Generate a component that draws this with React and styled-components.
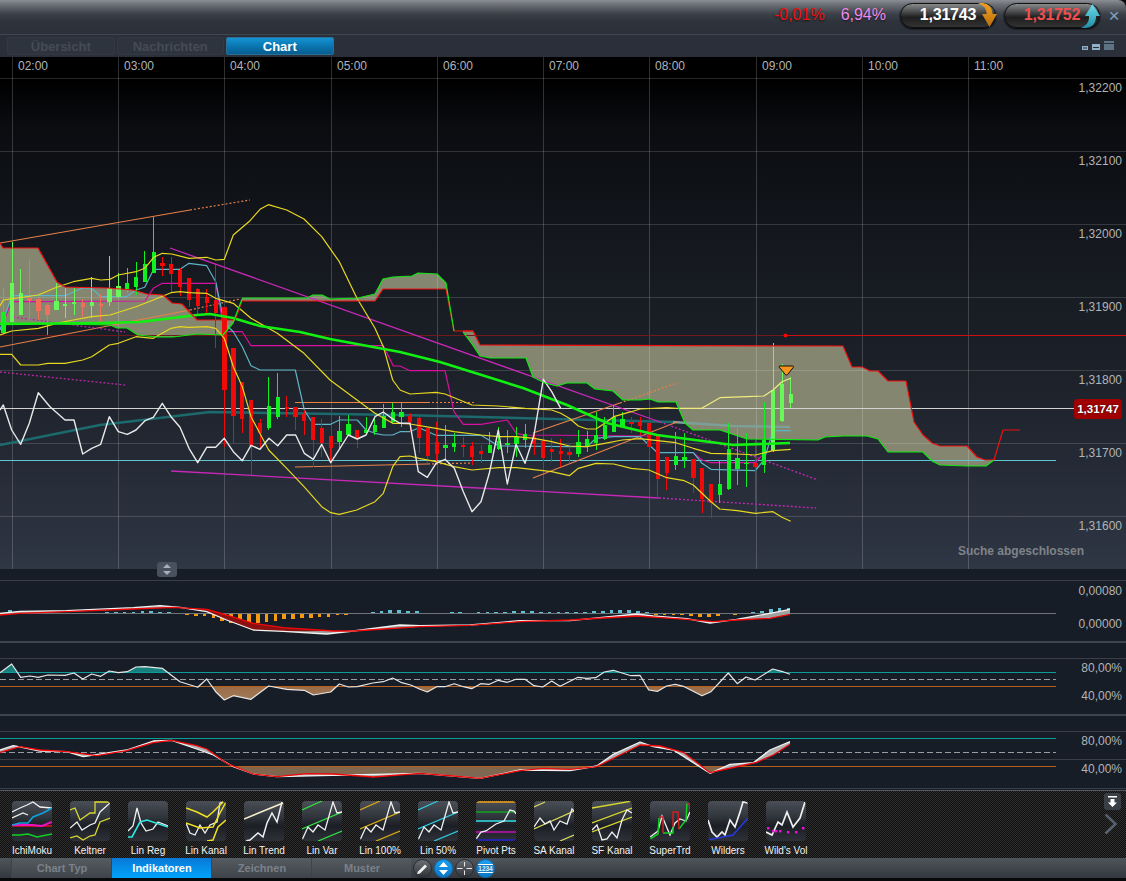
import React from "react";
import styled, { createGlobalStyle } from "styled-components";

const Global = createGlobalStyle`
  html, body { margin: 0; padding: 0; background: #000; }
  body { font-family: "Liberation Sans", Arial, sans-serif; overflow: hidden; }
`;

const Screen = styled.div`
  width: 1126px;
  height: 881px;
  display: flex;
  flex-direction: column;
  background: #0a0a0a;
  overflow: hidden;
`;

const TopBar = styled.div`
  height: 35px;
  flex: none;
  display: flex;
  align-items: center;
  justify-content: flex-end;
  padding: 0 4px 4px 0;
  box-sizing: border-box;
  background: linear-gradient(#8b8e95 0, #6a6d74 5px, #3c4149 14px, #2d323b 22px, #2b3039 34px);
  border-bottom: 1px solid #3f4650;
  border-top-right-radius: 8px;
`;

const Percent = styled.span`
  font-size: 16px;
  margin-right: ${(p) => p.$gap}px;
  color: ${(p) => p.$color};
  text-shadow: 0 1px 2px rgba(0, 0, 0, 0.6);
`;

const QuoteWrap = styled.div`
  position: relative;
  width: 96px;
  height: 25px;
  margin-right: ${(p) => p.$gap}px;
`;

const QuotePill = styled.div`
  height: 25px;
  box-sizing: border-box;
  border: 1px solid #111;
  border-radius: 13px;
  display: flex;
  align-items: center;
  justify-content: center;
  font-size: 16px;
  font-weight: bold;
  letter-spacing: -0.2px;
  color: ${(p) => p.$color};
  background: linear-gradient(#888a8c 0, #525354 30%, #1e1e1e 58%, #333 100%);
  box-shadow: 0 1px 2px #000;
`;

const QuoteArrow = styled.svg`
  position: absolute;
  right: -3px;
  top: 0;
`;

const CloseMark = styled.span`
  font-size: 19px;
  line-height: 19px;
  color: #7fa3be;
  width: 16px;
  text-align: center;
`;

const TabRow = styled.div`
  height: 22px;
  flex: none;
  display: flex;
  align-items: center;
  padding-left: 7px;
  box-sizing: border-box;
  background: #2a2f39;
`;

const Tab = styled.div`
  width: 107.5px;
  height: 18px;
  margin-right: 2px;
  display: flex;
  align-items: center;
  justify-content: center;
  border-radius: 3px;
  font-size: 13px;
  font-weight: bold;
  color: ${(p) => (p.$active ? "#fff" : "#454b55")};
  background: ${(p) => (p.$active ? "linear-gradient(#1597d8, #0a73ad 55%, #075a8a)" : "#2e343e")};
  box-shadow: ${(p) => (p.$active ? "inset 0 0 0 1px #2b6f95" : "inset 0 0 0 1px #333943")};
`;

const SizeIcons = styled.svg`
  margin-left: auto;
  margin-right: 12px;
`;

const ChartArea = styled.div`
  position: relative;
  z-index: 1;
  height: 512px;
  flex: none;
  background: linear-gradient(#000 0, #000 22px, #0a0c10 70px, #14171d 180px, #1d222b 330px, #2f3644 512px);
`;

const Plot = styled.svg`
  display: block;
  width: 1126px;
  height: 512px;
  text {
    font-family: "Liberation Sans", Arial, sans-serif;
    font-size: 12px;
    fill: #b2b4b8;
  }
`;

const PriceBadge = styled.div`
  position: absolute;
  right: 4px;
  top: 342px;
  width: 48px;
  height: 20px;
  border-radius: 3px;
  background: #a00000;
  color: #fff;
  font-size: 11.5px;
  font-weight: bold;
  display: flex;
  align-items: center;
  justify-content: center;
  text-shadow: 0 0 2px #300;
`;

const SearchNote = styled.div`
  position: absolute;
  right: 42px;
  top: 487px;
  font-size: 12px;
  font-weight: bold;
  color: #7f8388;
`;

const Stepper = styled.svg`
  position: absolute;
  left: 157px;
  top: 505px;
`;

const Panes = styled.div`
  height: 221px;
  flex: none;
  display: flex;
  flex-direction: column;
  background: #171d26;
`;

const Pane = styled.svg`
  display: block;
  width: 1126px;
  height: ${(p) => p.$h}px;
  flex: none;
  text {
    font-family: "Liberation Sans", Arial, sans-serif;
    font-size: 12px;
    fill: #b2b4b8;
  }
`;

const Strip = styled.div`
  position: relative;
  height: 68px;
  flex: none;
  box-sizing: border-box;
  padding: 10px 0 0 12px;
  display: flex;
  gap: 18px;
  border-top: 1px solid #55585e;
  background: repeating-conic-gradient(#2e2e2e 0 25%, #101010 0 50%) 0 0 / 2px 2px;
`;

const ThumbItem = styled.div`
  width: 40px;
  display: flex;
  flex-direction: column;
  align-items: center;
`;

const ThumbBox = styled.svg`
  width: 40px;
  height: 40px;
  display: block;
  border-radius: 4px;
  background: linear-gradient(#4a4e56 0, #30343b 40%, #1b1e24 62%, #2e3238 100%);
`;

const ThumbLabel = styled.div`
  margin-top: 3px;
  font-size: 10px;
  line-height: 13px;
  white-space: nowrap;
  color: #f2f2f2;
`;

const DockButton = styled.svg`
  position: absolute;
  right: 4px;
  top: 2px;
`;

const NextArrow = styled.svg`
  position: absolute;
  right: 8px;
  top: 22px;
`;

const BottomBar = styled.div`
  height: 20px;
  flex: none;
  display: flex;
  align-items: center;
  padding-left: 11px;
  background: linear-gradient(#50555c, #33383e);
`;

const BottomTab = styled.div`
  width: 100px;
  height: 20px;
  padding-left: 1px;
  display: flex;
  align-items: center;
  justify-content: center;
  box-sizing: border-box;
  border-left: 1px solid #3e4349;
  font-size: 11px;
  font-weight: bold;
  color: ${(p) => (p.$active ? "#fff" : "#7b8189")};
  background: ${(p) => (p.$active ? "linear-gradient(#0a78d6, #00a4fb)" : "linear-gradient(#565b62, #3f444a)")};
`;

const RoundRow = styled.div`
  display: flex;
  gap: 2px;
  margin-left: 2px;
`;

const RoundButton = styled.div`
  width: 19px;
  height: 19px;
  border-radius: 50%;
  overflow: hidden;
  display: flex;
  align-items: center;
  justify-content: center;
  box-sizing: border-box;
  border: 1px solid ${(p) => (p.$blue ? "#0d6fb8" : "#2a2d31")};
  background: ${(p) => (p.$blue ? "linear-gradient(#1b9ff0, #0a78c8)" : "linear-gradient(#6b6f76, #2f3237)")};
`;

const CounterText = styled.span`
  width: 19px;
  flex: none;
  font-size: 6.5px;
  line-height: 7px;
  font-weight: bold;
  text-align: center;
  color: #d8eefb;
  background: #1e7fc0;
  border-top: 1px solid #fff;
  border-bottom: 1px solid #fff;
`;

const Footer = styled.div`
  flex: 1;
  background: #08090a;
`;

// helpers: data below was read from crops at 3x, so it gets mapped back to page coordinates
const crop = (ox, oy) => (s) =>
  s
    .trim()
    .split(/\s+/)
    .map((p) => {
      const [x, y] = p.split(",").map(Number);
      return [ox + x / 3, oy + y / 3];
    });
const a = crop(0, 200);
const b = crop(400, 320);
const c = crop(0, 560);
const d = crop(420, 560);
const pts = (arr) => arr.map((p) => p[0].toFixed(1) + "," + p[1].toFixed(1)).join(" ");

const LINE_END = 1056;
const gridX = [12, 118, 224, 331, 437, 543, 649, 756, 862, 968];
const hours = ["02:00", "03:00", "04:00", "05:00", "06:00", "07:00", "08:00", "09:00", "10:00", "11:00"];
const gridY = [78, 151, 224, 297, 370, 443, 516];
const prices = ["1,32200", "1,32100", "1,32000", "1,31900", "1,31800", "1,31700", "1,31600"];

const redA = [[0, 243], [3, 248], [38, 248], [57, 282], [65, 287], [108, 288], [133, 290], [147, 294], [163, 295], [172, 303], [182, 304], [197, 320], [235, 320]];
const greenA = [[0, 323], [110, 325], [117, 328], [127, 328], [138, 335], [157, 337], [173, 337], [197, 334], [223, 335], [233, 323], [242, 299]];
const greenB = [[242, 298], [307, 298], [313, 295], [322, 295], [330, 299], [358, 298], [375, 294], [383, 279], [393, 277], [412, 276], [418, 273], [437, 274], [446, 283], [454, 331]];
const redB = [[242, 301], [375, 301], [383, 289], [446, 289], [454, 331], [473, 331]];
const redC = [[463, 331], [473, 331], [480, 345], [843, 346], [852, 367], [862, 367], [870, 371], [878, 371], [888, 381], [906, 381], [914, 422], [923, 435], [932, 443], [940, 446], [967, 446], [977, 457], [985, 460], [994, 460]];
const greenC = [[463, 332], [472, 344], [480, 356], [490, 358], [526, 358], [533, 377], [545, 383], [557, 386], [567, 383], [587, 383], [595, 389], [613, 391], [623, 400], [640, 400], [650, 399], [658, 402], [676, 402], [685, 423], [693, 430], [720, 430], [747, 439], [818, 440], [825, 437], [843, 436], [867, 436], [878, 439], [888, 452], [923, 452], [932, 461], [940, 465], [967, 466], [986, 466], [994, 460]];
const redTail = [[994, 460], [1003, 430], [1020, 430]];

const maGreen = [[0, 324], [100, 323], [140, 322], [197, 315], [210, 314], [233, 318], [260, 326], [300, 332], [330, 339], [400, 352], [440, 362], [523, 388], [567, 405], [607, 423], [657, 435], [733, 445], [790, 443]];
const maTeal = [[0, 445], [100, 425], [210, 412], [400, 415], [517, 418], [673, 422]];
const maTealCloud = [[673, 422], [733, 426], [790, 427]];

const whiteLine = [
  ...a("0,630 10,615 35,690 62,733 88,670 115,578 150,620 195,660 222,660 248,762 275,745 302,733 328,650 355,695 382,703 408,690 435,662 460,652 487,610 513,650 540,682 567,745 593,788 620,742 647,742 673,715 700,755 727,782 753,736 780,748 807,715 833,737 860,705 887,705 913,760 940,778 965,733 992,788 1018,748 1045,705 1072,717 1098,705 1125,650 1150,636 1178,657 1200,670"),
  ...b("30,310 55,455 82,472 108,430 135,418 163,445 190,515 216,575 243,545 268,460 295,330 322,492 348,373 375,430 402,345 430,178 455,215 482,265"),
];
const yellow1 = [
  ...a("0,318 10,300 115,285 170,262 220,245 275,235 302,240 330,238 355,225 408,215 434,205 461,172 487,160 515,162 567,175 620,172 647,180 673,178 700,105 750,62 780,28 805,14 860,30 912,57 965,110 1018,185 1071,295 1125,385 1150,440 1178,540 1200,570"),
];
const yellow1b = b("0,210 30,222 108,217 135,222 216,255 295,258 375,265 455,270 482,280 508,295 535,318 561,327 588,327 614,310 641,290 694,275 720,267 800,263 830,265");
const yellow1c = b("830,265 905,265 960,233 1040,230 1092,228 1119,210 1146,185 1172,175");
const yellow2 = [
  ...a("0,405 35,393 115,385 170,370 220,360 275,350 330,345 408,320 460,300 513,278 540,275 567,278 620,280 647,295 700,310 753,355 832,400 912,460 990,540 1071,600 1125,640 1178,670 1200,670"),
  ...b("30,312 108,325 162,335 243,345 296,350 349,350 402,355 455,365 508,378 561,380 614,370 667,360 720,356 773,362 827,368 880,385 933,400 1012,402 1066,405 1119,392 1172,388"),
];
const yellow3 = [
  ...a("0,463 35,463 62,495 115,495 143,490 195,490 248,480 275,470 328,435 355,430 408,410 460,415 513,385 540,380 567,382 620,380 647,385 673,415 700,500 727,560 753,650 806,750 860,805 912,860 965,920 992,938 1018,943 1070,930 1125,905 1150,880 1178,800 1200,770"),
  ...b("30,408 57,415 108,425 162,440 216,450 296,443 349,443 455,455 508,467 535,445 588,430 641,432 694,445 747,450 800,473 853,482 880,495 906,520 933,545 959,567 1012,572 1066,580 1119,575 1146,592 1172,604"),
];
const blueLine = [
  ...a("0,390 35,287 195,287 248,263 275,265 302,290 380,290 408,270 434,262 461,208 540,208 567,190 620,197 647,245 673,370 700,395 727,440 753,497 780,510 886,510 913,630 940,673 992,673 1018,660 1072,660 1098,690 1125,700 1150,705 1178,705 1200,695"),
  ...b("30,335 57,323 108,346 243,346 296,378 322,378 508,380 561,380 588,355 614,352 641,350 720,350 773,398 880,398 906,430 933,448 1066,452 1092,420 1119,332 1172,332"),
];
const magentaStep = [
  ...a("0,390 35,305 100,305 435,303 460,265 487,250 647,250 673,395 727,395 753,437 1150,437 1180,498 1200,498"),
  ...b("30,152 135,152 162,275 190,313 243,313 322,300 349,340 375,345 747,348"),
];
const magentaStep2 = b("880,398 906,420 933,428 1066,428 1092,400");

// x, high, low, bodyTop, bodyBottom, colour key; g = green, r = red, l/s = seen through the cloud
const candlesA = [
  [10, 265, 400, 335, 398, "g"], [36, 125, 365, 248, 365, "l"], [62, 207, 345, 280, 345, "l"], [88, 178, 360, 293, 303, "s"],
  [115, 295, 360, 297, 333, "s"], [142, 312, 405, 315, 345, "s"], [169, 250, 330, 303, 330, "l"], [195, 263, 353, 311, 318, "l"],
  [222, 265, 345, 307, 313, "l"], [248, 298, 352, 310, 322, "s"], [275, 232, 355, 307, 317, "l"], [302, 282, 367, 311, 317, "s"],
  [328, 168, 318, 265, 305, "l"], [355, 218, 290, 258, 290, "l"], [381, 205, 280, 248, 268, "g"], [408, 187, 285, 232, 260, "g"],
  [434, 153, 247, 193, 245, "g"], [461, 50, 220, 156, 220, "g"], [487, 172, 228, 188, 198, "r"], [513, 170, 275, 192, 223, "r"],
  [540, 205, 288, 210, 262, "r"], [567, 235, 320, 235, 300, "r"], [593, 265, 342, 267, 317, "r"], [620, 268, 342, 290, 308, "r"],
  [647, 195, 443, 300, 340, "r"], [673, 320, 740, 320, 570, "r"], [700, 445, 730, 445, 647, "r"], [726, 546, 700, 546, 656, "r"],
  [753, 601, 825, 601, 737, "r"], [780, 658, 745, 670, 698, "r"], [806, 530, 690, 617, 684, "g"], [833, 518, 658, 591, 650, "g"],
  [860, 587, 650, 622, 627, "r"], [886, 620, 690, 622, 652, "r"], [912, 630, 705, 642, 664, "r"], [939, 650, 800, 651, 720, "r"],
  [965, 657, 770, 685, 730, "r"], [992, 708, 790, 708, 743, "r"], [1018, 647, 745, 692, 725, "g"], [1045, 645, 705, 673, 706, "g"],
  [1071, 690, 745, 690, 714, "r"], [1098, 652, 702, 690, 700, "g"], [1124, 650, 705, 675, 697, "g"], [1151, 612, 685, 647, 684, "g"],
  [1178, 608, 670, 635, 665, "g"],
];
const candlesB = [
  [4, 250, 320, 277, 290, "g"], [30, 280, 335, 288, 305, "r"], [57, 282, 400, 293, 355, "r"], [83, 325, 430, 325, 408, "r"],
  [110, 305, 430, 366, 403, "r"], [136, 315, 420, 375, 385, "g"], [162, 340, 395, 370, 380, "g"], [189, 350, 410, 375, 382, "r"],
  [216, 367, 435, 377, 410, "r"], [243, 375, 430, 393, 402, "r"], [269, 337, 400, 375, 398, "g"], [296, 320, 390, 362, 388, "g"],
  [322, 330, 400, 370, 375, "g"], [349, 320, 410, 352, 372, "g"], [375, 312, 385, 343, 360, "g"], [402, 340, 405, 352, 372, "r"],
  [429, 345, 445, 363, 415, "r"], [455, 355, 425, 388, 396, "r"], [482, 358, 440, 392, 402, "r"], [508, 372, 430, 396, 405, "r"],
  [535, 330, 410, 367, 403, "g"], [561, 333, 395, 357, 382, "g"], [588, 277, 390, 345, 370, "g"], [614, 290, 360, 315, 358, "g"],
  [641, 255, 335, 290, 337, "g"], [667, 275, 325, 297, 318, "g"], [694, 290, 340, 305, 312, "r"], [720, 290, 345, 305, 318, "r"],
  [747, 300, 410, 310, 380, "r"], [773, 345, 535, 348, 478, "r"], [800, 412, 510, 412, 458, "r"], [827, 335, 450, 408, 435, "g"],
  [853, 340, 445, 412, 420, "g"], [880, 418, 520, 418, 474, "r"], [906, 445, 580, 445, 538, "r"], [933, 492, 595, 492, 550, "r"],
  [959, 420, 548, 492, 525, "g"], [986, 308, 510, 387, 508, "g"], [1012, 325, 495, 414, 448, "g"], [1039, 340, 502, 428, 432, "g"],
  [1066, 360, 580, 428, 442, "r"], [1092, 247, 460, 360, 435, "g"], [1119, 68, 395, 210, 393, "l"], [1146, 132, 305, 192, 302, "l"],
  [1172, 172, 265, 222, 248, "l"],
];
const candleColors = { g: "#10f020", r: "#f00a0a", l: "#68f85a", s: "#f0705a" };
const candles = [
  ...candlesA.map((k) => ({ x: k[0] / 3, hi: 200 + k[1] / 3, lo: 200 + k[2] / 3, top: 200 + k[3] / 3, bot: 200 + k[4] / 3, col: k[5] })),
  ...candlesB.map((k) => ({ x: 400 + k[0] / 3, hi: 320 + k[1] / 3, lo: 320 + k[2] / 3, top: 320 + k[3] / 3, bot: 320 + k[4] / 3, col: k[5] })),
];

const macdRed = [
  ...c("0,165 60,160 200,155 400,147 520,142 620,148 680,165 760,190 850,203 1000,213 1060,213 1260,200"),
  ...d("150,196 300,185 450,180 650,168 800,178 880,185 950,180 1050,175 1110,163"),
];
const macdWhite = [
  ...c("0,160 30,157 60,154 200,152 400,143 480,137 540,142 620,155 680,180 760,210 850,214 980,222 1060,213 1200,195 1260,197"),
  ...d("150,195 300,182 450,182 650,162 700,168 800,176 870,189 950,178 1050,160 1110,148"),
];
const histLeft = [
  [30, 8], [56, 3], [82, 3], [108, 2], [320, 2], [347, 2], [373, 2], [400, 3], [427, 5], [453, 5], [480, 4], [507, 1],
  [560, -3], [587, -5], [613, -5], [640, -13], [666, -22], [693, -28], [720, -30], [746, -33], [773, -28], [799, -25], [826, -20], [852, -16], [879, -14], [905, -12], [932, -12], [958, -10], [985, -8], [1012, -4], [1038, -2],
  [1118, 3], [1144, 7], [1170, 9], [1197, 9], [1223, 7], [1250, 5],
];
const histRight = [
  [95, 1], [120, 1], [175, 1], [202, 2], [228, 3], [255, 4], [282, 5], [308, 6], [335, 5], [362, 4], [388, 4], [415, 2], [441, 2], [468, 3], [495, 3], [521, 5], [548, 7], [574, 9], [600, 8], [627, 8], [653, 7], [680, 2],
  [707, -3], [733, -3], [760, -3], [786, -3], [813, -5], [840, -8], [866, -10], [893, -7], [945, -2],
  [998, 2], [1025, 6], [1052, 12], [1078, 15], [1105, 14],
];
const hist = [...histLeft.map((h) => [h[0] / 3, h[1] / 3]), ...histRight.map((h) => [420 + h[0] / 3, h[1] / 3])];

const oscLine = [
  ...c("0,338 35,312 62,352 90,348 115,352 143,345 195,346 222,339 248,357 275,342 302,349 328,333 355,338 382,335 408,321 435,320 487,325 513,345 540,365 593,382 620,357 647,395 673,420 700,407 753,418 806,378 860,388 913,391 940,405 992,396 1018,372 1045,381 1072,380 1118,369 1150,365 1178,354 1205,368 1232,375 1260,388"),
  ...d("22,396 50,380 75,380 103,371 130,380 155,386 182,371 208,373 235,361 262,367 288,358 315,358 342,377 368,381 395,363 420,379 474,352 500,355 527,353 553,336 580,331 633,347 660,346 686,390 713,394 740,378 766,373 793,380 846,407 873,395 925,339 952,371 978,351 1005,360 1058,327 1085,334 1110,343"),
];
const stochRed = [
  ...c("0,577 60,560 120,570 200,575 290,587 380,572 460,548 515,541 590,557 620,567 680,610 760,642 830,650 920,641 1000,642 1120,651 1260,640"),
  ...d("100,648 180,655 300,632 370,625 450,628 530,620 600,585 660,555 720,558 790,577 870,638 960,618 1010,607 1060,585 1110,553"),
];
const stochWhite = [
  ...c("0,570 40,557 120,573 200,575 250,590 380,570 460,543 515,541 590,567 640,585 700,620 760,642 830,650 1260,640"),
  ...d("180,655 300,630 450,632 530,618 580,583 660,546 700,560 760,570 870,640 930,613 1000,608 1050,570 1110,545"),
];

const between = (upper, lower) => pts([...upper, ...[...lower].reverse()]);
const closeTo = (line, y) => pts([[line[0][0], y], ...line, [line[line.length - 1][0], y]]);

const PL = ({ p, color, w = 1, dash, o }) => (
  <polyline points={pts(p)} fill="none" stroke={color} strokeWidth={w} strokeDasharray={dash} opacity={o} strokeLinejoin="round" />
);

const MainChart = () => (
  <Plot viewBox="0 57 1126 512">
    <polygon points={between(redA, greenA.slice(0, -1))} fill="#85866f" />
    <polygon points={between(greenB, redB.slice(0, -1))} fill="#85866f" />
    <polygon points={between(redC, greenC)} fill="#85866f" />

    {gridX.map((x) => (
      <line key={x} x1={x + 0.5} x2={x + 0.5} y1={57} y2={569} stroke="#fff" strokeOpacity="0.18" />
    ))}
    {gridY.map((y) => (
      <line key={y} x1={0} x2={1126} y1={y + 0.5} y2={y + 0.5} stroke="#fff" strokeOpacity="0.15" />
    ))}
    {hours.map((h, i) => (
      <text key={h} x={gridX[i] + 6} y={70}>{h}</text>
    ))}
    {prices.map((t, i) => (
      <text key={t} x={1122} y={92 + i * 73} textAnchor="end">{t}</text>
    ))}

    <line x1={0} x2={785} y1={335.5} y2={335.5} stroke="#701a1a" />
    <line x1={785} x2={1126} y1={335.5} y2={335.5} stroke="#d01010" />
    <circle cx={785.5} cy={335.5} r={2} fill="#f00" />

    <PL p={maTeal} color="#1c6a6e" w={2.4} />
    <PL p={maTealCloud} color="#7e9f98" w={2.4} />

    <line x1={0} x2={1075} y1={408.5} y2={408.5} stroke="#d2d2cf" />
    <line x1={0} x2={LINE_END} y1={460.5} y2={460.5} stroke="#5fc6d2" />

    <PL p={[[0, 243], [190, 210]]} color="#e8804a" w={1.2} />
    <PL p={[[190, 210], [250, 200]]} color="#e8804a" w={1.2} dash="2 2" />
    <PL p={[[0, 347], [190, 310]]} color="#e8804a" w={1.2} />
    <PL p={[[190, 310], [240, 299]]} color="#e8804a" w={1.2} dash="2 2" />
    <PL p={[[295, 402.5], [428, 402.5]]} color="#f08040" />
    <PL p={[[428, 402.5], [474, 402.5]]} color="#f08040" dash="2 2" />
    <PL p={[[295, 467], [428, 464]]} color="#e8804a" w={1.2} />
    <PL p={[[428, 464], [473, 463]]} color="#e8804a" w={1.2} dash="2 2" />
    <PL p={[[533, 433], [620, 403]]} color="#e8804a" w={1.2} />
    <PL p={[[620, 403], [677, 383]]} color="#e8804a" w={1.2} dash="2 2" />
    <PL p={[[533, 478], [677, 422]]} color="#e8804a" w={1.2} />

    <PL p={[[170, 248], [660, 422]]} color="#c828b8" w={1.3} />
    <PL p={[[660, 422], [818, 480]]} color="#c828b8" w={1.3} dash="2 2" />
    <PL p={[[171, 471], [659, 498]]} color="#c828b8" w={1.3} />
    <PL p={[[659, 498], [816, 508]]} color="#c828b8" w={1.3} dash="2 2" />
    <PL p={[[13, 317], [125, 332]]} color="#b828a8" w={1.3} dash="2 2" />
    <PL p={[[0, 372], [125, 385]]} color="#b828a8" w={1.3} dash="2 2" />

    <PL p={magentaStep} color="#d810a0" w={1.2} />
    <PL p={magentaStep2} color="#d810a0" w={1.2} />
    <PL p={blueLine} color="#5db4c6" w={1.2} />

    {candles.map((k, i) => (
      <g key={i} shapeRendering="crispEdges">
        <line x1={k.x} x2={k.x} y1={k.hi} y2={k.lo} stroke={candleColors[k.col]} />
        <rect x={k.x - 2} y={k.top} width={4.4} height={Math.max(k.bot - k.top, 1.5)} fill={candleColors[k.col]} />
      </g>
    ))}

    <PL p={yellow1} color="#e8d820" w={1.2} />
    <PL p={yellow1b} color="#e8d820" w={1.2} />
    <PL p={yellow1c} color="#f0ec80" w={1.2} />
    <PL p={yellow2} color="#e8d820" w={1.2} />
    <PL p={yellow3} color="#e8d820" w={1.2} />

    <PL p={maGreen} color="#12f012" w={2.6} />
    <PL p={whiteLine} color="#e8e8e8" w={1.4} />

    <PL p={[...redA, [242, 301]]} color="#f01010" w={1.2} />
    <PL p={redB} color="#f01010" w={1.2} />
    <PL p={[...redC, ...redTail]} color="#f01010" w={1.2} />
    <PL p={greenA} color="#10e810" w={1.2} />
    <PL p={greenB} color="#10e810" w={1.2} />
    <PL p={greenC} color="#10e810" w={1.2} />

    <path d="M780 366h12.500q1.500 0 .8 1.300l-5.600 7.200q-1.200 1.200-2.400 0l-6-7.200q-.7-1.300.7-1.300z" fill="#f7941d" stroke="#111" strokeWidth="1" />
  </Plot>
);

const MacdPane = () => (
  <Pane $h={74} viewBox="0 569 1126 74">
    <line x1={0} x2={1126} y1={580.5} y2={580.5} stroke="#3a3f47" />
    <line x1={0} x2={LINE_END} y1={613.5} y2={613.5} stroke="#70757b" />
    <line x1={0} x2={1126} y1={642} y2={642} stroke="#3d454e" strokeWidth="2" />
    {hist.map(([x, h], i) => (
      <rect key={i} x={x - 1.8} y={h > 0 ? 613 - Math.max(1, Math.round(h)) : 614} width={3.8} height={Math.max(1, Math.round(Math.abs(h)))} fill={h > 0 ? "#62c0d2" : "#f89a10"} shapeRendering="crispEdges" />
    ))}
    <polygon points={between(macdWhite, macdRed)} fill="#a0a0a0" />
    <polygon points={between(macdRed.slice(5, 10), macdWhite.slice(5, 11))} fill="#8c1010" />
    <PL p={macdWhite} color="#f2f2f2" w={1.3} />
    <PL p={macdRed} color="#f00808" w={1.3} />
    <text x={1122} y={595} textAnchor="end">0,00080</text>
    <text x={1122} y={628} textAnchor="end">0,00000</text>
  </Pane>
);

const OscPane = () => (
  <Pane $h={73} viewBox="0 643 1126 73">
    <defs>
      <clipPath id="oscTop"><rect x="0" y="643" width="1126" height="29.6" /></clipPath>
      <clipPath id="oscBottom"><rect x="0" y="686.6" width="1126" height="29" /></clipPath>
      <linearGradient id="oscBrown" x1="0" y1="0" x2="0" y2="1">
        <stop offset="0" stopColor="#8c5428" />
        <stop offset="1" stopColor="#a27a58" />
      </linearGradient>
    </defs>
    <line x1={0} x2={1126} y1={658.5} y2={658.5} stroke="#3a3f47" />
    <line x1={0} x2={1126} y1={715} y2={715} stroke="#3d454e" strokeWidth="2" />
    <polygon points={closeTo(oscLine, 672.6)} fill="#17807f" clipPath="url(#oscTop)" />
    <polygon points={closeTo(oscLine, 686.6)} fill="url(#oscBrown)" clipPath="url(#oscBottom)" />
    <line x1={0} x2={LINE_END} y1={672.5} y2={672.5} stroke="#0f9a9a" />
    <line x1={0} x2={LINE_END} y1={679.5} y2={679.5} stroke="#9a9c9f" strokeDasharray="6 3" />
    <line x1={0} x2={LINE_END} y1={686.5} y2={686.5} stroke="#b8601e" />
    <PL p={oscLine} color="#e6e6e6" w={1.2} />
    <text x={1122} y={672} textAnchor="end">80,00%</text>
    <text x={1122} y={700} textAnchor="end">40,00%</text>
  </Pane>
);

const StochPane = () => (
  <Pane $h={74} viewBox="0 716 1126 74">
    <defs>
      <clipPath id="stochBottom"><rect x="0" y="766.6" width="1126" height="23" /></clipPath>
      <linearGradient id="stochBrown" x1="0" y1="0" x2="0" y2="1">
        <stop offset="0" stopColor="#9a5c28" />
        <stop offset="1" stopColor="#7a6a58" />
      </linearGradient>
    </defs>
    <line x1={0} x2={1126} y1={731.5} y2={731.5} stroke="#3a3f47" />
    <line x1={0} x2={1126} y1={759.5} y2={759.5} stroke="#3a3f47" />
    <line x1={0} x2={1126} y1={788.5} y2={788.5} stroke="#3a3f47" />
    <polygon points={closeTo(stochRed, 766.6)} fill="url(#stochBrown)" clipPath="url(#stochBottom)" />
    <line x1={0} x2={LINE_END} y1={738.5} y2={738.5} stroke="#0f9a9a" />
    <line x1={0} x2={LINE_END} y1={752.5} y2={752.5} stroke="#9a9c9f" strokeDasharray="6 3" />
    <line x1={0} x2={LINE_END} y1={766.5} y2={766.5} stroke="#b8601e" />
    <polygon points={between(stochWhite, stochRed)} fill="#b0b0b0" />
    <PL p={stochWhite} color="#f2f2f2" w={1.3} />
    <PL p={stochRed} color="#f00808" w={1.3} />
    <text x={1122} y={745} textAnchor="end">80,00%</text>
    <text x={1122} y={773} textAnchor="end">40,00%</text>
  </Pane>
);

const W = "#f0f0f0";
const channel = (col) => [
  { p: "0,9 20,0", c: col },
  { p: "0,28 40,11", c: col },
  { p: "16,40 40,30", c: col },
];
const thumbs = [
  { name: "IchiMoku", lines: [
    { p: "0,11 8,7 15,4 21,1 28,6 40,7", c: W }, { p: "0,17 11,12 16,14", c: W },
    { p: "0,25 40,25", c: "#e01010" }, { p: "0,24 20,24 30,25 40,21", c: "#f010c0", w: 2 },
    { p: "0,24 8,22 16,22 21,16 31,12 40,7", c: "#10a0e0", w: 1.6 }, { p: "0,34 8,34 16,33 25,36 40,33", c: "#10d020", w: 1.6 },
  ] },
  { name: "Keltner", lines: [
    { p: "0,9 5,7 10,19 20,12 25,12 25,1 40,1", c: "#d8d830" }, { p: "0,37 7,35 13,39 20,35 25,34 30,21 40,17", c: "#d8d830" },
    { p: "0,27 7,21 12,29 20,24 25,22 30,11 40,2", c: W },
  ] },
  { name: "Lin Reg", lines: [
    { p: "0,30 5,25 9,7 13,22 18,30 25,28 30,21 40,25", c: W }, { p: "0,36 4,36 12,21 19,19 40,26", c: "#30e8e0", w: 1.6 },
  ] },
  { name: "Lin Kanal", lines: [
    { p: "0,22 4,32 9,34 14,24 19,32 24,24 31,21 34,2 37,1", c: W }, { p: "0,7 11,11 21,16 27,11 37,1", c: "#f0e020", w: 1.5 },
    { p: "0,22 14,27 27,26 34,12 40,1", c: "#f0e020", w: 1.5 }, { p: "21,40 27,39 32,26 40,19", c: "#f0e020", w: 1.5 },
  ] },
  { name: "Lin Trend", lines: [
    { p: "1,40 6,39 14,32 19,36 23,22 28,12 33,21 38,1", c: W, w: 1.5 }, { p: "0,18 39,2", c: "#f4eccc", w: 1.6 },
  ] },
  { name: "Lin Var", lines: [...channel("#30e040"), { p: "0,39 6,26 11,31 16,24 23,29 31,1 35,12 40,11", c: W }] },
  { name: "Lin 100%", lines: [...channel("#d8a818"), { p: "0,39 6,26 11,31 16,24 23,29 31,1 35,12 40,11", c: W }] },
  { name: "Lin 50%", lines: [...channel("#30c8e0"), { p: "0,39 6,26 11,31 16,24 23,29 31,1 35,12 40,11", c: W }] },
  { name: "Pivot Pts", lines: [
    { p: "0,1 40,1", c: "#f0a010", w: 1.5 }, { p: "0,11 40,11", c: "#10a020" }, { p: "0,20 40,20", c: "#30e0e8" },
    { p: "0,31 40,31", c: "#c010b0" }, { p: "0,39 40,39", c: "#2020d0", w: 1.5 }, { p: "0,38 5,31 10,30 20,23 28,20 34,9 38,10 40,13", c: W },
  ] },
  { name: "SA Kanal", lines: [
    { p: "0,6 11,1", c: "#d8d860" }, { p: "0,28 40,10", c: "#d8d860" }, { p: "26,40 40,34", c: "#d8d860" },
    { p: "0,26 6,17 11,23 16,20 20,29 26,20 33,23 38,8 40,10", c: W },
  ] },
  { name: "SF Kanal", lines: [
    { p: "0,7 40,0", c: "#d8d830" }, { p: "0,22 40,7", c: "#d8d830" }, { p: "0,31 40,16", c: "#d8d830" },
    { p: "0,29 5,24 10,39 15,38 20,31 25,37 30,19 35,9 40,12", c: W },
  ] },
  { name: "SuperTrd", lines: [
    { p: "0,36 8,30 12,15 20,34 25,22 30,18 36,20 40,11", c: W },
    { p: "0,38 8,33 9,17", c: "#10d020", w: 1.5 }, { p: "13,32 23,32 23,26", c: "#10d020", w: 1.5 }, { p: "29,28 36,19 37,2", c: "#10d020", w: 1.5 },
    { p: "9,16 13,16 13,32", c: "#d02020", w: 1.5 }, { p: "23,26 23,11 28,11 29,28", c: "#d02020", w: 1.5 }, { p: "37,2 40,4 40,8", c: "#d02020", w: 1.5 },
  ] },
  { name: "Wilders", lines: [
    { p: "0,19 4,31 9,36 14,31 17,34 22,19 27,26 32,11 35,1 40,2", c: W, w: 1.7 }, { p: "0,39 25,34 40,17", c: "#2838e0", w: 1.5 },
  ] },
  { name: "Wild's Vol", dots: [[2, 27], [7, 30], [10, 30], [14, 30], [22, 31], [30, 31], [37, 27]], lines: [
    { p: "0,31 6,34 12,21 16,24 21,11 27,26 34,17 39,1", c: W, w: 1.7 },
  ] },
];

const Thumb = ({ item }) => (
  <ThumbItem>
    <ThumbBox viewBox="0 0 40 40">
      {item.lines.map((l, i) => (
        <polyline key={i} points={l.p} fill="none" stroke={l.c} strokeWidth={l.w || 1.3} />
      ))}
      {item.dots && item.dots.map((o, i) => <rect key={i} x={o[0] - 1} y={o[1] - 1} width="2.4" height="2.4" fill="#f010e0" />)}
    </ThumbBox>
    <ThumbLabel>{item.name}</ThumbLabel>
  </ThumbItem>
);

const App = () => (
  <Screen>
    <Global />
    <TopBar>
      <Percent $gap={16} $color="#f01010">-0,01%</Percent>
      <Percent $gap={14} $color="#f08ae8">6,94%</Percent>
      <QuoteWrap $gap={8}>
        <QuotePill $color="#fff">1,31743</QuotePill>
        <QuoteArrow width="22" height="26" viewBox="0 0 22 26">
          <defs>
            <linearGradient id="downFill" x1="0" y1="0" x2="0" y2="1">
              <stop offset="0" stopColor="#f0a020" />
              <stop offset="1" stopColor="#b86f0c" />
            </linearGradient>
          </defs>
          <path d="M1 0h5q8 1 9.500 10v1H20L12.500 24 5 11h4.500v-2Q8.500 3 1 0z" fill="url(#downFill)" />
        </QuoteArrow>
      </QuoteWrap>
      <QuoteWrap $gap={6}>
        <QuotePill $color="#f05050">1,31752</QuotePill>
        <QuoteArrow width="22" height="26" viewBox="0 0 22 26">
          <defs>
            <linearGradient id="upFill" x1="0" y1="0" x2="0" y2="1">
              <stop offset="0" stopColor="#6fdcec" />
              <stop offset="1" stopColor="#1f8fa4" />
            </linearGradient>
          </defs>
          <path d="M0 25h5q9-1 10-10v-2h4L11.500 1 4 13h4v2q0 6-8 10z" fill="url(#upFill)" />
        </QuoteArrow>
      </QuoteWrap>
      <CloseMark>×</CloseMark>
    </TopBar>
    <TabRow>
      <Tab>Übersicht</Tab>
      <Tab>Nachrichten</Tab>
      <Tab $active>Chart</Tab>
      <SizeIcons width="32" height="10" viewBox="0 0 32 10">
        <rect x="0" y="5" width="6" height="4" fill="#8fb0c6" />
        <rect x="1" y="6.500" width="4" height="1" fill="#2a2f39" />
        <rect x="10" y="3" width="8" height="6" fill="#8fb0c6" />
        <rect x="11" y="6" width="6" height="1" fill="#2a2f39" />
        <rect x="22" y="0" width="10" height="9" fill="#5d7484" />
        <rect x="22" y="2" width="10" height="1" fill="#2a2f39" />
      </SizeIcons>
    </TabRow>
    <ChartArea>
      <MainChart />
      <PriceBadge>1,31747</PriceBadge>
      <SearchNote>Suche abgeschlossen</SearchNote>
      <Stepper width="20" height="15" viewBox="0 0 20 15">
        <rect x="0" y="0" width="20" height="15" rx="3" fill="#49515f" />
        <path d="M10 2l4 4H6z" fill="#a9afb8" />
        <path d="M10 13l4-4H6z" fill="#a9afb8" />
      </Stepper>
    </ChartArea>
    <Panes>
      <MacdPane />
      <OscPane />
      <StochPane />
    </Panes>
    <Strip>
      {thumbs.map((t) => (
        <Thumb key={t.name} item={t} />
      ))}
      <DockButton width="18" height="18" viewBox="0 0 18 18">
        <rect x="0" y="0" width="17" height="17" rx="3" fill="#3a3f46" />
        <rect x="4" y="3" width="9" height="1.500" fill="#fff" />
        <path d="M6.500 6h4v3.500H13L8.500 14 4 9.500h2.500z" fill="#fff" />
      </DockButton>
      <NextArrow width="14" height="22" viewBox="0 0 14 22">
        <path d="M1.500 1.500L11.500 11 1.500 20.500" fill="none" stroke="#56606e" strokeWidth="2.500" />
      </NextArrow>
    </Strip>
    <BottomBar>
      <BottomTab>Chart Typ</BottomTab>
      <BottomTab $active>Indikatoren</BottomTab>
      <BottomTab>Zeichnen</BottomTab>
      <BottomTab>Muster</BottomTab>
      <RoundRow>
        <RoundButton>
          <svg width="13" height="13" viewBox="0 0 13 13">
            <path d="M2 9.500L9 2.500l2 2-7 7-3 .5z" fill="#f0f0f0" />
          </svg>
        </RoundButton>
        <RoundButton $blue>
          <svg width="13" height="15" viewBox="0 0 13 15">
            <path d="M6.500 1l4.500 5H2zM6.500 14L2 9h9z" fill="#fff" />
          </svg>
        </RoundButton>
        <RoundButton>
          <svg width="15" height="15" viewBox="0 0 15 15">
            <path d="M0 7.500h5.500M9.500 7.500H15M7.500 1v4.500M7.500 9.500V14" stroke="#e8e8e8" strokeWidth="1" fill="none" />
          </svg>
        </RoundButton>
        <RoundButton $blue>
          <CounterText>1234</CounterText>
        </RoundButton>
      </RoundRow>
    </BottomBar>
    <Footer />
  </Screen>
);

export default App;
